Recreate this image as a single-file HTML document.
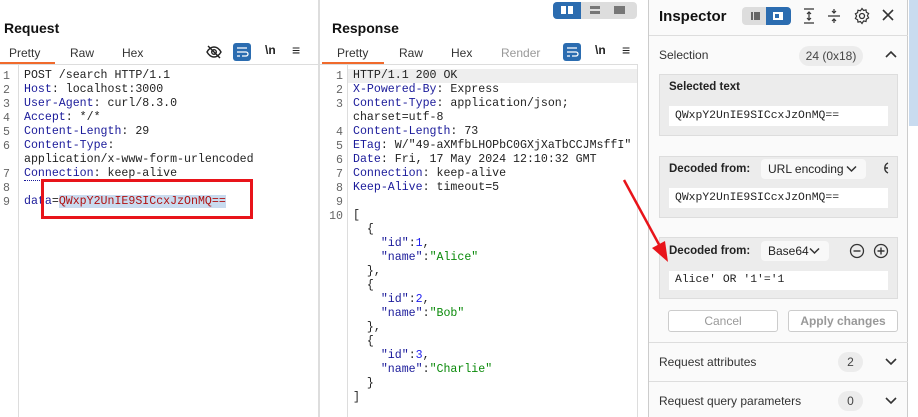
<!DOCTYPE html>
<html><head><meta charset="utf-8"><style>
*{margin:0;padding:0;box-sizing:border-box}
body{width:918px;height:417px;background:#fff;font-family:"Liberation Sans",sans-serif;position:relative;overflow:hidden;color:#222}
.abs{position:absolute}
.title{font-weight:bold;font-size:14px;color:#111}
.tab{font-size:12px;color:#333}
.code{font-family:"Liberation Mono",monospace;font-size:11.6px;line-height:14px;white-space:pre;color:#222}
.ln{font-family:"Liberation Mono",monospace;font-size:11.6px;line-height:14px;white-space:pre;color:#666;text-align:left}
.k{color:#1a1a9a}.s{color:#0a8a0a}.n{color:#2020ee}.r{color:#b01010}
.box{background:#ececec;border:1px solid #ddd}
.inp{background:#fff;font-family:"Liberation Mono",monospace;font-size:11.4px;color:#222;padding-left:6px;line-height:20px}
.pill{background:#ececec;border-radius:10px;font-size:12px;color:#444;text-align:center;line-height:20px}
</style></head><body>
<!-- Request panel -->
<div class="abs title" style="left:4px;top:20px">Request</div>
<div class="abs tab" style="left:9px;top:46px">Pretty</div>
<div class="abs tab" style="left:70px;top:46px">Raw</div>
<div class="abs tab" style="left:122px;top:46px">Hex</div>
<div class="abs" style="left:0;top:62px;width:55px;height:2px;background:#f06a2c"></div>
<div class="abs" style="left:0;top:64px;width:318px;height:1px;background:#ddd"></div>
<svg class="abs" style="left:206px;top:44px" width="16" height="16" viewBox="0 0 16 16"><path d="M1 8c2-3.5 4.5-5 7-5s5 1.5 7 5c-2 3.5-4.5 5-7 5S3 11.5 1 8z" fill="none" stroke="#222" stroke-width="1.4"/><circle cx="8" cy="8" r="2.3" fill="none" stroke="#222" stroke-width="1.4"/><path d="M2 2l12 12" stroke="#222" stroke-width="1.4"/></svg>
<div class="abs" style="left:233px;top:43px;width:18px;height:18px;background:#2b6cb0;border-radius:3px"></div>
<svg class="abs" style="left:235px;top:45px" width="14" height="14"><path d="M2 3h10M2 7h9a2 2 0 010 4H7M2 11h3" stroke="#fff" stroke-width="1.3" fill="none"/></svg>
<div class="abs" style="left:265px;top:43px;font-size:12px;font-weight:bold">\n</div>
<div class="abs" style="left:292px;top:42px;font-size:14px">≡</div>
<div class="abs" style="left:18px;top:65px;width:1px;height:352px;background:#ddd"></div>
<div class="abs ln" style="left:3px;top:70px">1
2
3
4
5
6

7
8
9</div>
<div class="abs code" style="left:24px;top:69px">POST /search HTTP/1.1
<span class="k">Host</span>: localhost:3000
<span class="k">User-Agent</span>: curl/8.3.0
<span class="k">Accept</span>: */*
<span class="k">Content-Length</span>: 29
<span class="k">Content-Type</span>:
application/x-www-form-urlencoded
<span class="k" style="border-bottom:1px dotted #1a1a9a">Connection</span>: keep-alive

<span class="k">data</span>=<span class="r" style="background:#c9dbef">QWxpY2UnIE9SICcxJzOnMQ==</span></div>
<div class="abs" style="left:41px;top:179px;width:212px;height:40px;border:3px solid #e8141a"></div>
<div class="abs" style="left:318px;top:0;width:2px;height:417px;background:#ddd"></div>
<!-- Response panel -->
<div class="abs" style="left:553px;top:2px;width:84px;height:17px;background:#ddd;border-radius:4px"></div>
<div class="abs" style="left:553px;top:2px;width:28px;height:17px;background:#2b6cb0;border-radius:4px 0 0 4px"></div>
<div class="abs" style="left:561px;top:6px;width:5px;height:8px;background:#fff"></div><div class="abs" style="left:568px;top:6px;width:5px;height:8px;background:#fff"></div>
<div class="abs" style="left:590px;top:6px;width:10px;height:3px;background:#777"></div><div class="abs" style="left:590px;top:11px;width:10px;height:3px;background:#777"></div>
<div class="abs" style="left:614px;top:6px;width:11px;height:8px;background:#777"></div>
<div class="abs title" style="left:332px;top:20px">Response</div>
<div class="abs tab" style="left:337px;top:46px">Pretty</div>
<div class="abs tab" style="left:399px;top:46px">Raw</div>
<div class="abs tab" style="left:451px;top:46px">Hex</div>
<div class="abs tab" style="left:501px;top:46px;color:#999">Render</div>
<div class="abs" style="left:322px;top:62px;width:62px;height:2px;background:#f06a2c"></div>
<div class="abs" style="left:320px;top:64px;width:318px;height:1px;background:#ddd"></div>
<div class="abs" style="left:563px;top:43px;width:18px;height:18px;background:#2b6cb0;border-radius:3px"></div>
<svg class="abs" style="left:565px;top:45px" width="14" height="14"><path d="M2 3h10M2 7h9a2 2 0 010 4H7M2 11h3" stroke="#fff" stroke-width="1.3" fill="none"/></svg>
<div class="abs" style="left:595px;top:43px;font-size:12px;font-weight:bold">\n</div>
<div class="abs" style="left:622px;top:42px;font-size:14px">≡</div>
<div class="abs" style="left:347px;top:65px;width:1px;height:352px;background:#ddd"></div>
<div class="abs" style="left:348px;top:69px;width:289px;height:14px;background:#eee"></div>
<div class="abs" style="left:637px;top:65px;width:1px;height:352px;background:#ddd"></div>
<div class="abs ln" style="left:326px;top:70px;text-align:right;width:17px">1
2
3

4
5
6
7
8
9
10</div>
<div class="abs code" style="left:353px;top:69px">HTTP/1.1 200 OK
<span class="k">X-Powered-By</span>: Express
<span class="k">Content-Type</span>: application/json;
charset=utf-8
<span class="k">Content-Length</span>: 73
<span class="k">ETag</span>: W/"49-aXMfbLHOPbC0GXjXaTbCCJMsffI"
<span class="k">Date</span>: Fri, 17 May 2024 12:10:32 GMT
<span class="k">Connection</span>: keep-alive
<span class="k">Keep-Alive</span>: timeout=5

[
  {
    <span class="k">"id"</span>:<span class="n">1</span>,
    <span class="k">"name"</span>:<span class="s">"Alice"</span>
  },
  {
    <span class="k">"id"</span>:<span class="n">2</span>,
    <span class="k">"name"</span>:<span class="s">"Bob"</span>
  },
  {
    <span class="k">"id"</span>:<span class="n">3</span>,
    <span class="k">"name"</span>:<span class="s">"Charlie"</span>
  }
]</div>
<!-- Inspector -->
<div class="abs" style="left:648px;top:0;width:260px;height:417px;background:#fafafa;border-left:1px solid #ccc;border-right:1px solid #ccc"></div>
<div class="abs" style="left:909px;top:0;width:9px;height:126px;background:#c9dbef"></div>
<div class="abs title" style="left:659px;top:8px;font-size:15px">Inspector</div>
<div class="abs" style="left:742px;top:7px;width:49px;height:18px;background:#ddd;border-radius:4px"></div>
<div class="abs" style="left:766px;top:7px;width:25px;height:18px;background:#2b6cb0;border-radius:0 4px 4px 0"></div>
<div class="abs" style="left:751px;top:12px;width:2px;height:8px;background:#666"></div>
<div class="abs" style="left:754px;top:12px;width:6px;height:8px;background:#666"></div>
<div class="abs" style="left:773px;top:12px;width:10px;height:8px;border:2px solid #fff;border-right-width:4px"></div>
<svg class="abs" style="left:802px;top:7px" width="14" height="18"><path d="M2 2h10M2 16h10M7 5v8M5 7l2-2 2 2M5 11l2 2 2-2" stroke="#333" stroke-width="1.2" fill="none"/></svg>
<svg class="abs" style="left:827px;top:7px" width="14" height="18"><path d="M1 9h12M7 2v4M7 12v4M5 4l2 2 2-2M5 14l2-2 2 2" stroke="#333" stroke-width="1.2" fill="none"/></svg>
<svg class="abs" style="left:853px;top:7px" width="18" height="18" viewBox="0 0 18 18"><circle cx="9" cy="9" r="2.5" fill="none" stroke="#333" stroke-width="1.3"/><path d="M9 1.5l1.6 2 2.4-.6.4 2.4 2.2 1.2-1.2 2.2 1.2 2.2-2.2 1.2-.4 2.4-2.4-.6L9 16.5l-1.6-2-2.4.6-.4-2.4-2.2-1.2L3.6 9 2.4 6.8l2.2-1.2.4-2.4 2.4.6z" fill="none" stroke="#333" stroke-width="1.2"/></svg>
<svg class="abs" style="left:881px;top:8px" width="14" height="14"><path d="M2 2l10 10M12 2L2 12" stroke="#333" stroke-width="1.6"/></svg>
<div class="abs" style="left:649px;top:35px;width:259px;height:1px;background:#ddd"></div>
<div class="abs" style="left:659px;top:48px;font-size:12px;color:#333">Selection</div>
<div class="abs pill" style="left:799px;top:46px;width:64px">24 (0x18)</div>
<svg class="abs" style="left:885px;top:50px" width="12" height="10"><path d="M1 7l5-5 5 5" stroke="#333" stroke-width="1.6" fill="none"/></svg>
<div class="abs box" style="left:659px;top:74px;width:239px;height:62px"></div>
<div class="abs" style="left:669px;top:81px;font-size:11.5px;font-weight:bold;color:#222">Selected text</div>
<div class="abs inp" style="left:669px;top:106px;width:219px;height:20px">QWxpY2UnIE9SICcxJzOnMQ==</div>
<div class="abs box" style="left:659px;top:156px;width:239px;height:62px"></div>
<div class="abs" style="left:669px;top:163px;font-size:11.5px;font-weight:bold">Decoded from:</div>
<div class="abs" style="left:761px;top:159px;width:105px;height:20px;background:#f8f8f8;border-radius:4px;font-size:12px;line-height:20px;padding-left:7px">URL encoding</div>
<svg class="abs" style="left:846px;top:165px" width="11" height="8"><path d="M1 1.5l4.5 4.5 4.5-4.5" stroke="#333" stroke-width="1.5" fill="none"/></svg>
<svg class="abs" style="left:880px;top:161px" width="10" height="14"><path d="M8 2a5.5 5.5 0 000 10M5 7h3" stroke="#333" stroke-width="1.4" fill="none"/></svg>
<div class="abs inp" style="left:669px;top:188px;width:219px;height:20px">QWxpY2UnIE9SICcxJzOnMQ==</div>
<div class="abs box" style="left:659px;top:237px;width:239px;height:62px"></div>
<div class="abs" style="left:669px;top:245px;font-size:11.5px;font-weight:bold">Decoded from:</div>
<div class="abs" style="left:761px;top:241px;width:68px;height:20px;background:#f8f8f8;border-radius:4px;font-size:12px;line-height:20px;padding-left:7px">Base64</div>
<svg class="abs" style="left:809px;top:247px" width="11" height="8"><path d="M1 1.5l4.5 4.5 4.5-4.5" stroke="#333" stroke-width="1.5" fill="none"/></svg>
<svg class="abs" style="left:849px;top:243px" width="16" height="16"><circle cx="8" cy="8" r="6.5" fill="none" stroke="#333" stroke-width="1.3"/><path d="M4.5 8h7" stroke="#333" stroke-width="1.4"/></svg>
<svg class="abs" style="left:873px;top:243px" width="16" height="16"><circle cx="8" cy="8" r="6.5" fill="none" stroke="#333" stroke-width="1.3"/><path d="M4.5 8h7M8 4.5v7" stroke="#333" stroke-width="1.4"/></svg>
<div class="abs inp" style="left:669px;top:271px;width:219px;height:19px;line-height:19px">Alice' OR '1'='1</div>
<div class="abs" style="left:668px;top:310px;width:110px;height:22px;border:1px solid #ccc;border-radius:3px;background:#fff;font-size:12px;color:#999;text-align:center;line-height:20px">Cancel</div>
<div class="abs" style="left:788px;top:310px;width:110px;height:22px;border:1px solid #ccc;border-radius:3px;background:#fff;font-size:12px;color:#999;font-weight:bold;text-align:center;line-height:20px">Apply changes</div>
<div class="abs" style="left:649px;top:342px;width:259px;height:1px;background:#ddd"></div>
<div class="abs" style="left:659px;top:355px;font-size:12px;color:#333">Request attributes</div>
<div class="abs pill" style="left:838px;top:352px;width:25px">2</div>
<svg class="abs" style="left:885px;top:357px" width="12" height="10"><path d="M1 2l5 5 5-5" stroke="#333" stroke-width="1.6" fill="none"/></svg>
<div class="abs" style="left:649px;top:381px;width:259px;height:1px;background:#ddd"></div>
<div class="abs" style="left:659px;top:394px;font-size:12px;color:#333">Request query parameters</div>
<div class="abs pill" style="left:838px;top:391px;width:25px">0</div>
<svg class="abs" style="left:885px;top:396px" width="12" height="10"><path d="M1 2l5 5 5-5" stroke="#333" stroke-width="1.6" fill="none"/></svg>
<!-- arrow -->
<svg class="abs" style="left:0;top:0" width="918" height="417"><line x1="624" y1="180" x2="662" y2="250" stroke="#e8141a" stroke-width="2.5"/><polygon points="668,262 652,248 665,241" fill="#e8141a"/></svg>
</body></html>
